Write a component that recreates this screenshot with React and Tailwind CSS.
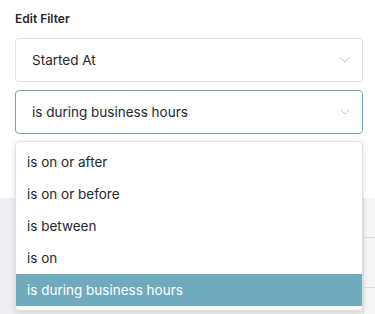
import { ChevronDown } from "lucide-react"

const opciones = ["is on or after", "is on or before", "is between", "is on", "is during business hours"]

const Selector = ({ valor, activo }) => (
    <div className={`flex items-center justify-between h-[44px] pl-4 pr-[9px] bg-white rounded-[4px] border ${activo ? "border-[#6eaabd]" : "border-[#e1e1e4]"}`}>
        <span className="text-[13.5px] text-[#25272b]">{valor}</span>
        <ChevronDown className="w-[16px] h-[16px] text-[#bfc1c5]" strokeWidth={1.4} />
    </div>
)

export default function App() {
    return (
        <div className="relative w-[375px] h-[314px] overflow-hidden flex flex-col bg-[#efeff1] font-['Inter',sans-serif]">
            <div className="h-[198px] bg-white px-[15px] pt-[12px] flex flex-col">
                <h3 className="text-xs font-semibold text-[#24262a] leading-[14px]">Edit Filter</h3>
                <div className="flex flex-col gap-2 mt-3 w-[348px]">
                    <Selector valor="Started At" />
                    <Selector valor="is during business hours" activo />
                </div>
            </div>
            <div className="flex-1 flex justify-end">
                <div className="w-[12px] bg-[#f6f6f7] border-l border-[#e3e3e5] flex flex-col">
                    <div className="h-[39px]" />
                    <div className="h-[50px] border-t border-[#dcdcdf]" />
                    <div className="flex-1 border-t border-[#dcdcdf]" />
                </div>
            </div>
            <ul className="absolute left-[15px] top-[141px] w-[348px] bg-white border border-[#e1e1e4] rounded-[4px] py-1 shadow-[0_2px_6px_rgba(0,0,0,0.12)]">
                {opciones.map((o) => (
                    <li key={o} className={`h-8 flex items-center px-[11px] text-[13.5px] ${o === "is during business hours" ? "bg-[#6fabbd] text-white" : "text-[#25272b]"}`}>
                        {o}
                    </li>
                ))}
            </ul>
        </div>
    )
}
